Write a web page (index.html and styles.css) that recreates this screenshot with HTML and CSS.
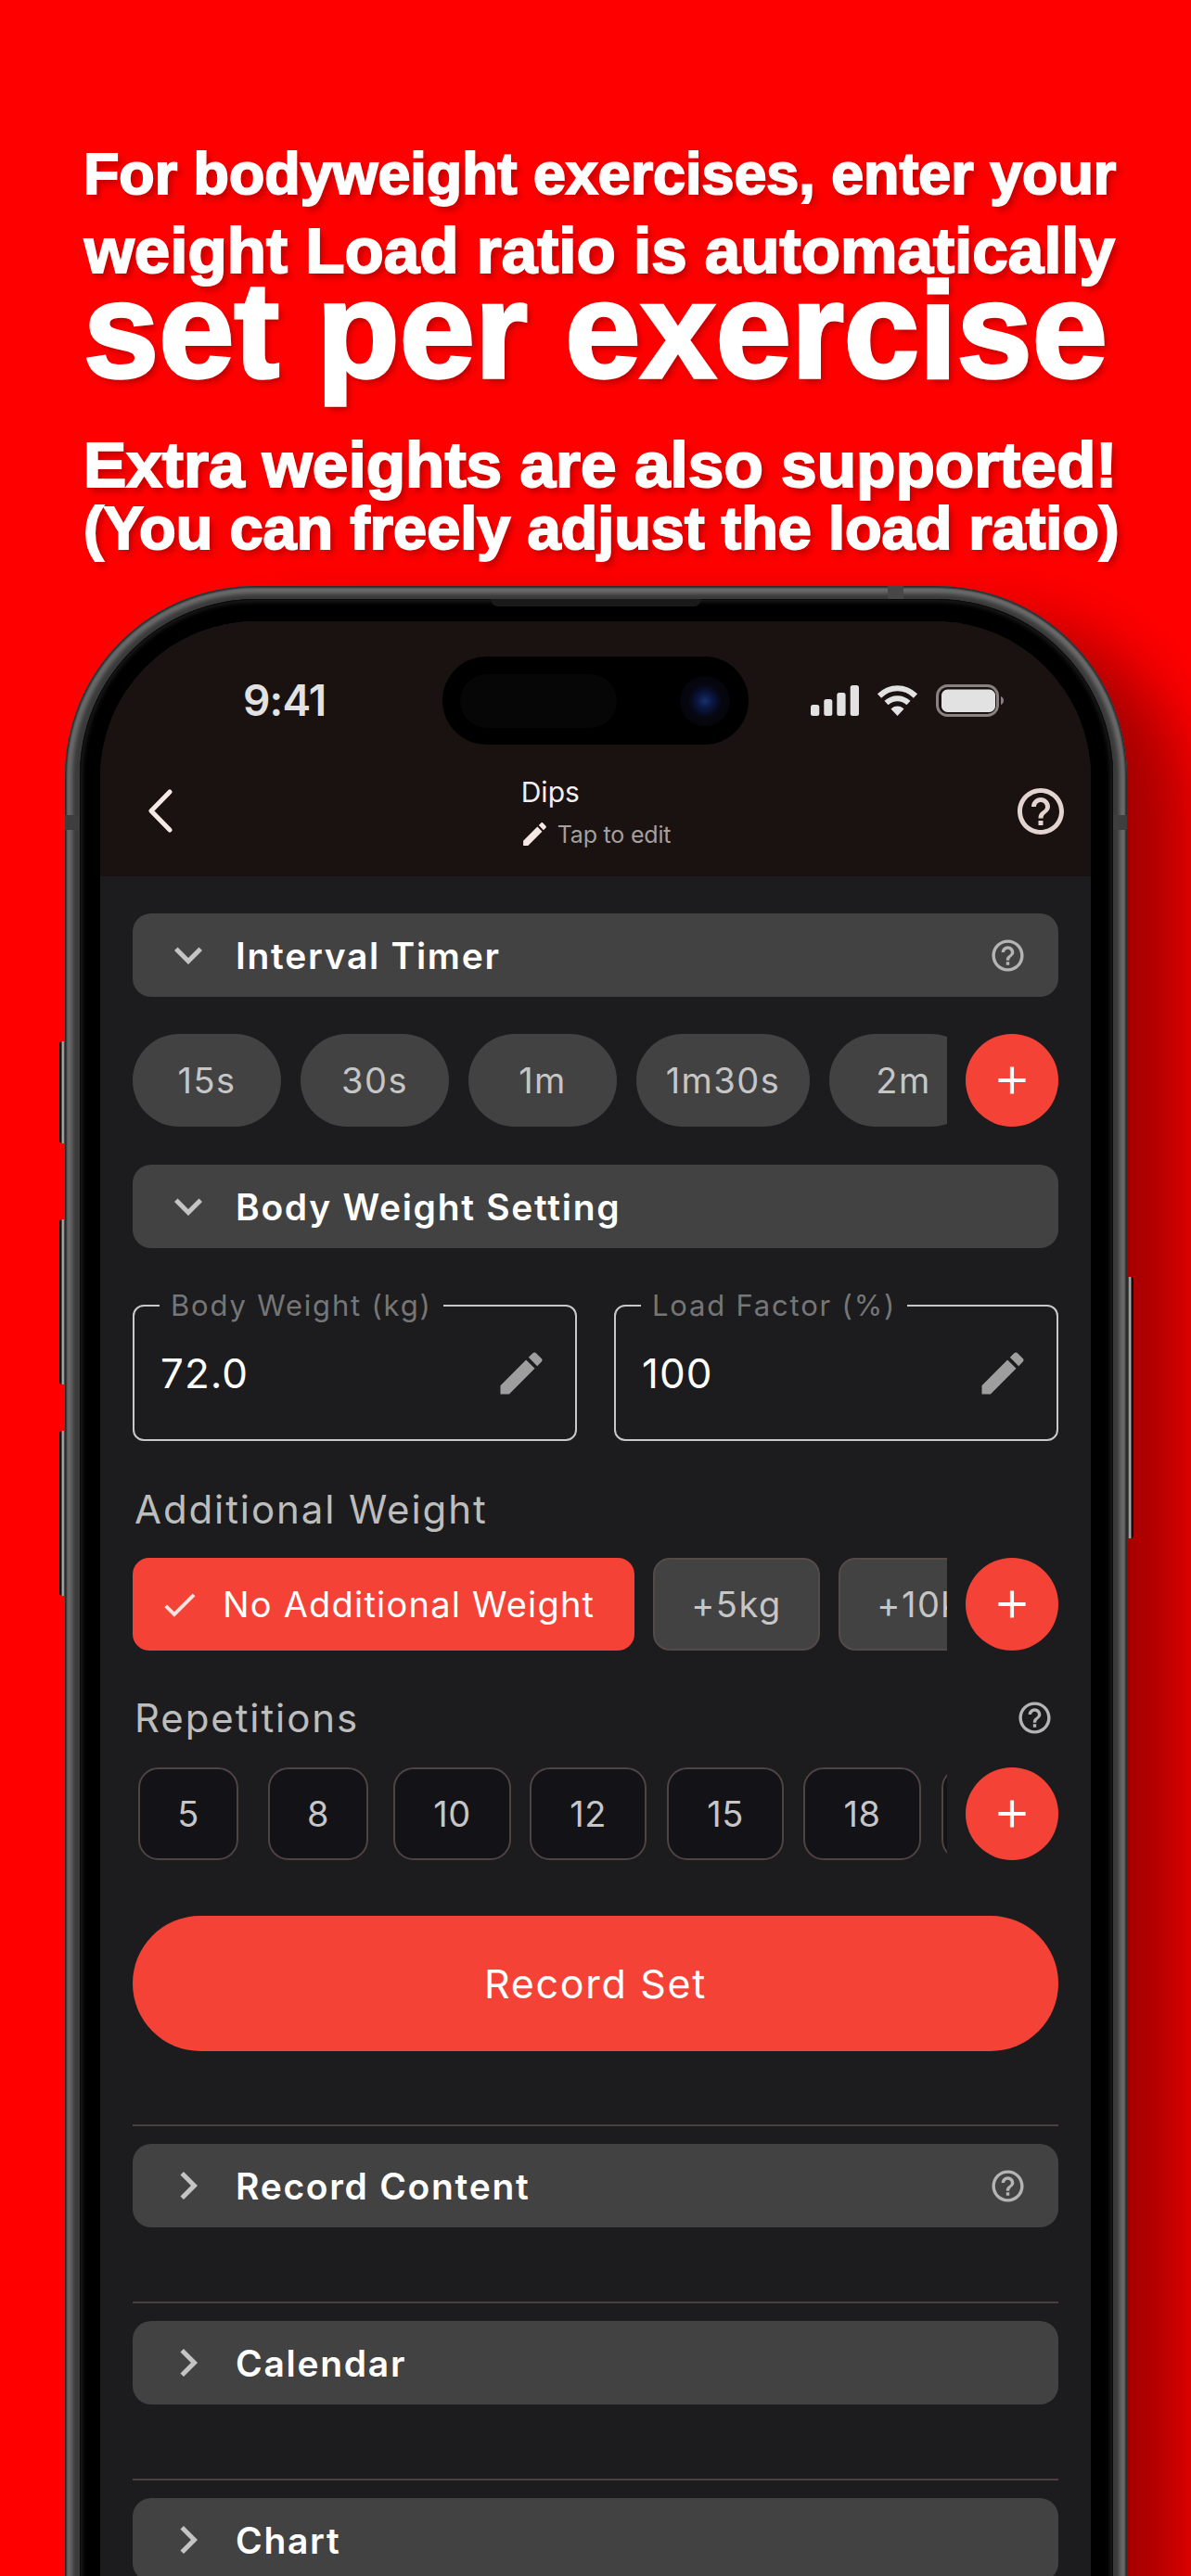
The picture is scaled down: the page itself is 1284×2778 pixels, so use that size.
FILE: index.html
```html
<!DOCTYPE html>
<html lang="en">
<head>
<meta charset="utf-8">
<title>Dips</title>
<link rel="stylesheet" href="styles.css">
</head>
<body>
<div class="page">
  <h1 class="headline">
    <span class="line line-1">For bodyweight exercises, enter your</span>
    <span class="line line-2">weight Load ratio is automatically</span>
    <span class="line line-3">set per exercise</span>
    <span class="line line-4">Extra weights are also supported!</span>
    <span class="line line-5">(You can freely adjust the load ratio)</span>
  </h1>

  <div class="phone">
    <i class="side side-mute"></i><i class="side side-up"></i><i class="side side-down"></i><i class="side side-power"></i>
    <i class="antenna"></i><i class="band band-left"></i><i class="band band-right"></i>
    <div class="bezel">
      <i class="speaker"></i>
      <div class="screen">
        <header class="appbar">
          <div class="status">
            <span class="time">9:41</span>
            <div class="island"><i class="sensor"></i><i class="camera"></i></div>
            <div class="status-icons">
              <svg class="signal" viewBox="0 0 52 33"><rect x="0" y="21" width="9.300" height="12" rx="2.500"/><rect x="14.300" y="15" width="9" height="18" rx="2.500"/><rect x="28.300" y="8" width="9.300" height="25" rx="2.500"/><rect x="42.700" y="0" width="9.300" height="33" rx="2.500"/></svg>
              <svg class="wifi" viewBox="0 0 45 33"><path d="M3 11.500C14.500 .5 30.500 .5 42 11.500" /><path d="M10.500 19C17.500 12.500 27.500 12.500 34.500 19"/><path class="dot" d="M22.500 33L15.500 25.500C19.500 21.500 25.500 21.500 29.500 25.500Z"/></svg>
              <svg class="battery" viewBox="0 0 73 35"><rect class="shell" x="1.500" y="1.500" width="65" height="32" rx="11"/><rect class="charge" x="6" y="5.500" width="58" height="24.500" rx="6.500"/><path class="nub" d="M70 13c2 .8 3 2.500 3 4.500s-1 3.700-3 4.500z"/></svg>
            </div>
          </div>
          <div class="nav">
            <svg class="back" viewBox="0 0 29 47"><path d="M25 3L5 23.500L25 44"/></svg>
            <div class="title">
              <span class="title-main">Dips</span>
              <span class="title-sub">
                <svg class="edit-small" viewBox="0 0 24 24"><path d="M3 17.250V21h3.750L17.810 9.940l-3.750-3.750L3 17.250zM20.710 7.040c.39-.39.39-1.020 0-1.410l-2.340-2.340c-.39-.39-1.020-.39-1.410 0l-1.830 1.830 3.750 3.750 1.830-1.830z"/></svg>
                Tap to edit
              </span>
            </div>
            <svg class="help help-top" viewBox="0 0 24 24"><path d="M11 18h2v-2h-2v2zm1-16C6.480 2 2 6.480 2 12s4.480 10 10 10 10-4.480 10-10S17.520 2 12 2zm0 18c-4.410 0-8-3.590-8-8s3.590-8 8-8 8 3.590 8 8-3.590 8-8 8zm0-14c-2.210 0-4 1.790-4 4h2c0-1.100.9-2 2-2s2 .9 2 2c0 2-3 1.750-3 5h2c0-2.250 3-2.500 3-5 0-2.210-1.790-4-4-4z"/></svg>
          </div>
        </header>

        <main class="content">
          <div class="section-head first">
            <svg class="chev" viewBox="0 0 24 24"><path d="M7.410 8.590L12 13.170l4.590-4.580L18 10l-6 6-6-6 1.410-1.410z"/></svg>
            <span class="section-title">Interval Timer</span>
            <svg class="help" viewBox="0 0 24 24"><path d="M11 18h2v-2h-2v2zm1-16C6.480 2 2 6.480 2 12s4.480 10 10 10 10-4.480 10-10S17.520 2 12 2zm0 18c-4.410 0-8-3.590-8-8s3.590-8 8-8 8 3.590 8 8-3.590 8-8 8zm0-14c-2.210 0-4 1.790-4 4h2c0-1.100.9-2 2-2s2 .9 2 2c0 2-3 1.750-3 5h2c0-2.250 3-2.500 3-5 0-2.210-1.790-4-4-4z"/></svg>
          </div>

          <div class="chip-row timers-row">
            <div class="scroller timers">
              <span class="chip pill">15s</span>
              <span class="chip pill">30s</span>
              <span class="chip pill">1m</span>
              <span class="chip pill">1m30s</span>
              <span class="chip pill">2m</span>
            </div>
            <span class="add"><svg viewBox="0 0 24 24"><path d="M19 13h-6v6h-2v-6H5v-2h6V5h2v6h6v2z"/></svg></span>
          </div>

          <div class="section-head body-weight">
            <svg class="chev" viewBox="0 0 24 24"><path d="M7.410 8.590L12 13.170l4.590-4.580L18 10l-6 6-6-6 1.410-1.410z"/></svg>
            <span class="section-title">Body Weight Setting</span>
          </div>

          <div class="fields">
            <div class="field">
              <span class="field-label">Body Weight (kg)</span>
              <span class="field-value">72.0</span>
              <svg class="edit" viewBox="0 0 24 24"><path d="M3 17.250V21h3.750L17.810 9.940l-3.750-3.750L3 17.250zM20.710 7.040c.39-.39.39-1.020 0-1.410l-2.340-2.340c-.39-.39-1.020-.39-1.410 0l-1.830 1.830 3.750 3.750 1.830-1.830z"/></svg>
            </div>
            <div class="field">
              <span class="field-label">Load Factor (%)</span>
              <span class="field-value">100</span>
              <svg class="edit" viewBox="0 0 24 24"><path d="M3 17.250V21h3.750L17.810 9.940l-3.750-3.750L3 17.250zM20.710 7.040c.39-.39.39-1.020 0-1.410l-2.340-2.340c-.39-.39-1.020-.39-1.410 0l-1.830 1.830 3.750 3.750 1.830-1.830z"/></svg>
            </div>
          </div>

          <div class="label-row additional"><span class="row-label">Additional Weight</span></div>
          <div class="chip-row weights-row">
            <div class="scroller weights">
              <span class="chip square selected"><svg class="check" viewBox="0 0 24 24"><path d="M9 16.170L4.830 12l-1.410 1.410L9 19 21 7l-1.410-1.410z"/></svg>No Additional Weight</span>
              <span class="chip square">+5kg</span>
              <span class="chip square">+10kg</span>
            </div>
            <span class="add"><svg viewBox="0 0 24 24"><path d="M19 13h-6v6h-2v-6H5v-2h6V5h2v6h6v2z"/></svg></span>
          </div>

          <div class="label-row reps-label">
            <span class="row-label">Repetitions</span>
            <svg class="help" viewBox="0 0 24 24"><path d="M11 18h2v-2h-2v2zm1-16C6.480 2 2 6.480 2 12s4.480 10 10 10 10-4.480 10-10S17.520 2 12 2zm0 18c-4.410 0-8-3.590-8-8s3.590-8 8-8 8 3.590 8 8-3.590 8-8 8zm0-14c-2.210 0-4 1.790-4 4h2c0-1.100.9-2 2-2s2 .9 2 2c0 2-3 1.750-3 5h2c0-2.250 3-2.500 3-5 0-2.210-1.790-4-4-4z"/></svg>
          </div>
          <div class="chip-row reps-row">
            <div class="scroller reps">
              <span class="rep">5</span>
              <span class="rep">8</span>
              <span class="rep">10</span>
              <span class="rep">12</span>
              <span class="rep">15</span>
              <span class="rep">18</span>
              <span class="rep">20</span>
            </div>
            <span class="add"><svg viewBox="0 0 24 24"><path d="M19 13h-6v6h-2v-6H5v-2h6V5h2v6h6v2z"/></svg></span>
          </div>

          <button class="record">Record Set</button>

          <hr class="divider first-divider">
          <div class="section-head collapsed">
            <svg class="chev" viewBox="0 0 24 24"><path d="M10 6L8.590 7.410 13.170 12l-4.580 4.590L10 18l6-6z"/></svg>
            <span class="section-title">Record Content</span>
            <svg class="help" viewBox="0 0 24 24"><path d="M11 18h2v-2h-2v2zm1-16C6.480 2 2 6.480 2 12s4.480 10 10 10 10-4.480 10-10S17.520 2 12 2zm0 18c-4.410 0-8-3.590-8-8s3.590-8 8-8 8 3.590 8 8-3.590 8-8 8zm0-14c-2.210 0-4 1.790-4 4h2c0-1.100.9-2 2-2s2 .9 2 2c0 2-3 1.750-3 5h2c0-2.250 3-2.500 3-5 0-2.210-1.790-4-4-4z"/></svg>
          </div>
          <hr class="divider">
          <div class="section-head collapsed">
            <svg class="chev" viewBox="0 0 24 24"><path d="M10 6L8.590 7.410 13.170 12l-4.580 4.590L10 18l6-6z"/></svg>
            <span class="section-title">Calendar</span>
          </div>
          <hr class="divider">
          <div class="section-head collapsed">
            <svg class="chev" viewBox="0 0 24 24"><path d="M10 6L8.590 7.410 13.170 12l-4.580 4.590L10 18l6-6z"/></svg>
            <span class="section-title">Chart</span>
          </div>
        </main>
      </div>
    </div>
  </div>
</div>
</body>
</html>
```
FILE: styles.css
```css
* { box-sizing: border-box; }
html, body { margin: 0; padding: 0; }
body { width: 1284px; height: 2778px; overflow: hidden; background: #ff0000; }
.page { width: 1284px; height: 2778px; overflow: hidden; background: #ff0000; font-family: "Inter", "Liberation Sans", sans-serif; }

/* Headline */
.headline { margin: 0; padding: 145px 0 0 90px; color: #fff; font-family: "Liberation Sans", Arial, sans-serif; font-weight: 700; }
.line { display: block; white-space: nowrap; -webkit-text-stroke: 2px #fff; text-shadow: 4px 5px 7px rgba(120, 0, 0, .5); }
.line-1 { font-size: 62.8px; line-height: 84px; }
.line-2 { font-size: 69.2px; line-height: 82px; margin-left: 1px; }
.line-3 { font-size: 146px; line-height: 91px; -webkit-text-stroke: 3.5px #fff; }
.line-4 { font-size: 69.4px; line-height: 80px; margin-top: 59px; }
.line-5 { font-size: 64.9px; line-height: 58px; }

/* Phone */
.phone {
  position: relative;
  width: 1145px;
  margin: 33px 0 0 70px;
  padding: 14px 15px 0 16px;
  height: 2400px;
  border-radius: 205px 205px 0 0 / 205px 205px 0 0;
  background: #3a3a3a;
  box-shadow:
    inset 0 0 2px 2px #2a2a2a,
    inset 0 0 4px 8px #6c6c6c,
    70px 30px 70px -10px rgba(0, 0, 0, .36);
}
.side { position: absolute; display: block; width: 7px; background: linear-gradient(90deg, #111 0, #111 25%, #c8c8c8 55%, #444 80%, #1a1a1a 100%); }
.side-mute { left: -6px; top: 491px; height: 110px; border-radius: 3px 0 0 3px; }
.side-up { left: -6px; top: 683px; height: 178px; border-radius: 3px 0 0 3px; }
.side-down { left: -6px; top: 911px; height: 178px; border-radius: 3px 0 0 3px; }
.side-power { right: -7px; top: 745px; height: 282px; border-radius: 0 3px 3px 0; background: linear-gradient(270deg, #111 0, #111 25%, #c8c8c8 55%, #444 80%, #1a1a1a 100%); }
.antenna { position: absolute; display: block; left: 887px; top: 0; width: 17px; height: 14px; background: #474747; }
.band { position: absolute; display: block; top: 247px; width: 15px; height: 16px; background: #3e3e3e; }
.band-left { left: 0; }
.band-right { right: 0; }

.bezel { position: relative; height: 100%; padding: 24px 24px 0 22px; background: #000; border-radius: 190px 190px 0 0 / 190px 190px 0 0; box-shadow: inset 0 0 0 1px #0a0a0a, inset 0 0 5px 3px #1e1e1e; }
.speaker { position: absolute; display: block; left: 443px; top: 0; width: 227px; height: 8px; background: #1a1a1a; border-radius: 0 0 8px 8px; }
.screen { position: relative; height: 100%; background: #1c1c1e; border-radius: 168px 168px 0 0 / 168px 168px 0 0; overflow: hidden; }

/* App bar */
.appbar { height: 275px; background: #1a1211; }
.status { position: relative; height: 170px; padding-left: 154px; display: flex; align-items: center; justify-content: space-between; padding-right: 94px; }
.time { font-size: 46px; font-weight: 600; color: #e2e2e2; letter-spacing: -0.8px; }
.island { position: absolute; left: 369px; top: 38px; width: 330px; height: 95px; background: #000; border-radius: 48px; }
.sensor { position: absolute; display: block; left: 19px; top: 19px; width: 169px; height: 58px; border-radius: 29px; background: #060606; }
.camera { position: absolute; display: block; left: 256px; top: 21px; width: 54px; height: 54px; border-radius: 50%; background: radial-gradient(circle at 50% 50%, #16306a 0, #0b1540 22%, #05060f 48%, #050508 100%); }
.status-icons { display: flex; align-items: center; gap: 19px; }
.signal { width: 52px; height: 33px; fill: #e2e2e2; }
.wifi { width: 45px; height: 33px; fill: none; stroke: #e2e2e2; stroke-width: 6; }
.wifi .dot { fill: #e2e2e2; stroke: none; }
.battery { width: 73px; height: 35px; }
.battery .shell { fill: none; stroke: #8a8280; stroke-width: 3; }
.battery .charge { fill: #e2e2e2; }
.battery .nub { fill: #8a8280; }

.nav { height: 105px; padding: 9px 24px 0 50px; display: flex; align-items: flex-start; justify-content: space-between; }
.back { width: 29px; height: 47px; margin-top: 2px; fill: none; stroke: #f6e8e4; stroke-width: 5; stroke-linecap: round; stroke-linejoin: round; }
.title { display: flex; flex-direction: column; align-items: flex-start; margin-left: 6px; }
.title-main { font-size: 30px; line-height: 36px; color: #f4efee; margin-top: -13px; }
.title-sub { display: flex; align-items: center; gap: 8px; margin-top: 11px; margin-left: -2px; font-size: 25px; line-height: 32px; letter-spacing: -.2px; color: #a4a09e; }
.edit-small { width: 33px; height: 33px; fill: #f6e8e4; }
.help { fill: #b4b4b4; width: 41px; height: 41px; flex: none; }
.help-top { width: 60px; height: 60px; fill: #e4d4d0; margin-top: -4px; }

/* Content */
.content { padding: 40px 35px 0 35px; }
.section-head { display: flex; align-items: center; height: 90px; padding: 0 34px 0 30px; background: #424242; border-radius: 20px; }
.chev { width: 60px; height: 60px; fill: #c4c4c4; flex: none; }
.section-title { flex: 1; margin-left: 21px; font-size: 39px; font-weight: 600; color: #fff; letter-spacing: 1.7px; white-space: nowrap; }
.body-weight { margin-top: 41px; }

.chip-row { display: flex; align-items: center; gap: 20px; height: 100px; }
.scroller { flex: 1; min-width: 0; height: 100px; overflow: hidden; display: grid; grid-auto-flow: column; }
.timers-row { margin-top: 40px; }
.timers { grid-template-columns: 160px 160px 160px 187px 160px; gap: 21px; }
.chip { display: flex; align-items: center; justify-content: center; height: 100px; background: #424242; color: #c6c6c6; font-size: 38px; letter-spacing: 1.5px; white-space: nowrap; }
.pill { border-radius: 50px; }
.add { flex: none; width: 100px; height: 100px; border-radius: 50%; background: #f44336; display: flex; align-items: center; justify-content: center; }
.add svg { width: 50px; height: 50px; fill: #fff; }

.fields { margin-top: 61px; display: grid; grid-template-columns: 479px 479px; gap: 40px; }
.field { position: relative; height: 147px; display: flex; align-items: center; justify-content: space-between; padding: 0 28px 0 28px; border: 2px solid #c8c8c8; border-radius: 12px; }
.field-label { position: absolute; left: 27px; top: -19px; padding: 0 12px; background: #1c1c1e; color: #767676; font-size: 31px; line-height: 36px; letter-spacing: 1.8px; white-space: nowrap; }
.field-value { font-size: 44px; color: #fff; letter-spacing: 1px; }
.edit { width: 60px; height: 60px; fill: #9e9e9e; }

.label-row { display: flex; align-items: center; justify-content: space-between; height: 50px; padding-left: 2px; }
.row-label { font-size: 42px; color: #bdbdbd; letter-spacing: 1.9px; }
.additional { margin-top: 48px; }
.weights-row { margin-top: 28px; }
.weights { grid-template-columns: 541px 180px 198px; gap: 20px; }
.square { border-radius: 18px; border: 2px solid #544a48; }
.selected { justify-content: flex-start; padding-left: 26px; gap: 24px; background: #f44336; border-color: #f44336; color: #fff; letter-spacing: 1.2px; }
.check { width: 45px; height: 45px; fill: #fbe4e0; flex: none; }

.reps-label { margin-top: 47px; padding-right: 5px; }
.reps-row { margin-top: 29px; }
.reps { display: flex; padding-left: 6px; }
.rep { flex: none; display: flex; align-items: center; justify-content: center; width: 127px; height: 100px; margin-left: 21px; background: #131217; border: 2px solid #4f4442; border-radius: 22px; color: #c6c6c6; font-size: 38px; letter-spacing: .5px; }
.rep:nth-child(1) { width: 108px; margin-left: 0; }
.rep:nth-child(2) { width: 108px; margin-left: 32px; }
.rep:nth-child(3) { margin-left: 27px; }
.rep:nth-child(4) { width: 126px; margin-left: 20px; }
.rep:nth-child(5) { width: 126px; margin-left: 22px; }
.rep:nth-child(7) { margin-left: 22px; }

.record { display: block; width: 100%; height: 146px; margin-top: 60px; border: 0; border-radius: 73px; background: #f44336; color: #fff; font-family: inherit; font-size: 43px; letter-spacing: 1.7px; }

.divider { margin: 80px 0 19px; height: 2px; border: 0; background: #4a4040; }
.first-divider { margin-top: 79px; }
```
